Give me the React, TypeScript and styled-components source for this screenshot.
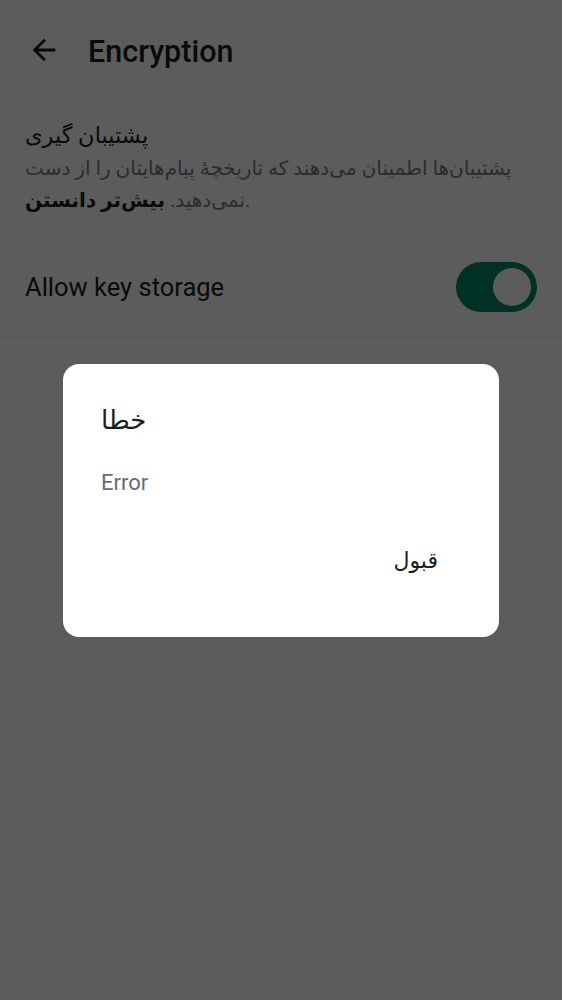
import React from 'react';
import styled, { createGlobalStyle } from 'styled-components';

const GlobalStyle = createGlobalStyle`
  html, body {
    margin: 0;
    padding: 0;
    background: #ffffff;
  }
  body {
    font-family: Roboto, "DejaVu Sans", "Noto Sans", sans-serif;
    color: #1b1d22;
  }
`;

const Screen = styled.div`
  min-height: 100vh;
  background: #ffffff;
`;

const TopBar = styled.header`
  display: flex;
  align-items: center;
  height: 100px;
  padding-left: 26px;
  gap: 26px;
`;

const BackButton = styled.button`
  display: flex;
  align-items: center;
  justify-content: center;
  width: 36px;
  height: 36px;
  padding: 0;
  border: none;
  background: none;
  color: #1b1d22;
`;

const Title = styled.h1`
  margin: 0;
  font-size: 30.5px;
  font-weight: 500;
  padding-top: 2px;
`;

const Section = styled.section`
  padding: 18px 25px 0;
`;

const SectionTitle = styled.div`
  font-size: 22.5px;
  line-height: 34px;
  color: #1b1d22;
`;

const Description = styled.p`
  margin: 0;
  font-size: 20px;
  line-height: 32px;
  color: #737d8c;
  white-space: nowrap;

  b {
    color: #1b1d22;
    font-weight: 700;
  }
`;

const ToggleRow = styled.div`
  display: flex;
  align-items: center;
  justify-content: space-between;
  height: 100px;
  margin-top: 21px;
  padding: 0 25px;
  border-bottom: 1px solid #e3e8f0;
`;

const ToggleLabel = styled.span`
  font-size: 25.5px;
  color: #1b1d22;
`;

const Switch = styled.div<{ on: boolean }>`
  display: flex;
  align-items: center;
  justify-content: ${({ on }) => (on ? 'flex-end' : 'flex-start')};
  width: 81px;
  height: 50px;
  box-sizing: border-box;
  padding: 0 6px;
  border-radius: 25px;
  background: ${({ on }) => (on ? '#00866a' : '#c1c6cd')};
`;

const Thumb = styled.span`
  width: 38px;
  height: 38px;
  border-radius: 50%;
  background: #ffffff;
`;

const Scrim = styled.div`
  position: fixed;
  inset: 0;
  display: flex;
  align-items: center;
  justify-content: center;
  background: rgba(0, 0, 0, 0.64);
`;

const Dialog = styled.div`
  display: flex;
  flex-direction: column;
  width: 436px;
  height: 273px;
  box-sizing: border-box;
  padding: 38px 61px 0 38px;
  border-radius: 16px;
  background: #ffffff;
`;

const DialogTitle = styled.div`
  font-size: 26px;
  line-height: 36px;
  color: #1b1d22;
`;

const DialogBody = styled.div`
  margin-top: 31px;
  font-size: 22px;
  line-height: 28px;
  color: #656d77;
`;

const DialogActions = styled.div`
  display: flex;
  justify-content: flex-end;
  margin-top: 47px;
`;

const TextButton = styled.button`
  padding: 0;
  border: none;
  background: none;
  font-family: inherit;
  font-size: 22px;
  line-height: 34px;
  color: #1b1d22;
`;

const ArrowBack = () => (
  <svg width="34" height="34" viewBox="0 0 24 24" fill="currentColor">
    <path d="M20 11H7.83l5.59-5.59L12 4l-8 8 8 8 1.41-1.41L7.83 13H20v-2z" />
  </svg>
);

export default function App() {
  return (
    <>
      <GlobalStyle />
      <Screen>
        <TopBar>
          <BackButton aria-label="Back">
            <ArrowBack />
          </BackButton>
          <Title>Encryption</Title>
        </TopBar>

        <Section>
          <SectionTitle>پشتیبان گیری</SectionTitle>
          <Description>
            پشتیبان‌ها اطمینان می‌دهند که تاریخچهٔ پیام‌هایتان را از دست
            <br />
            نمی‌دهید. <b>بیش‌تر دانستن</b>.
          </Description>
        </Section>

        <ToggleRow>
          <ToggleLabel>Allow key storage</ToggleLabel>
          <Switch on>
            <Thumb />
          </Switch>
        </ToggleRow>
      </Screen>

      <Scrim>
        <Dialog role="dialog">
          <DialogTitle>خطا</DialogTitle>
          <DialogBody>Error</DialogBody>
          <DialogActions>
            <TextButton>قبول</TextButton>
          </DialogActions>
        </Dialog>
      </Scrim>
    </>
  );
}
